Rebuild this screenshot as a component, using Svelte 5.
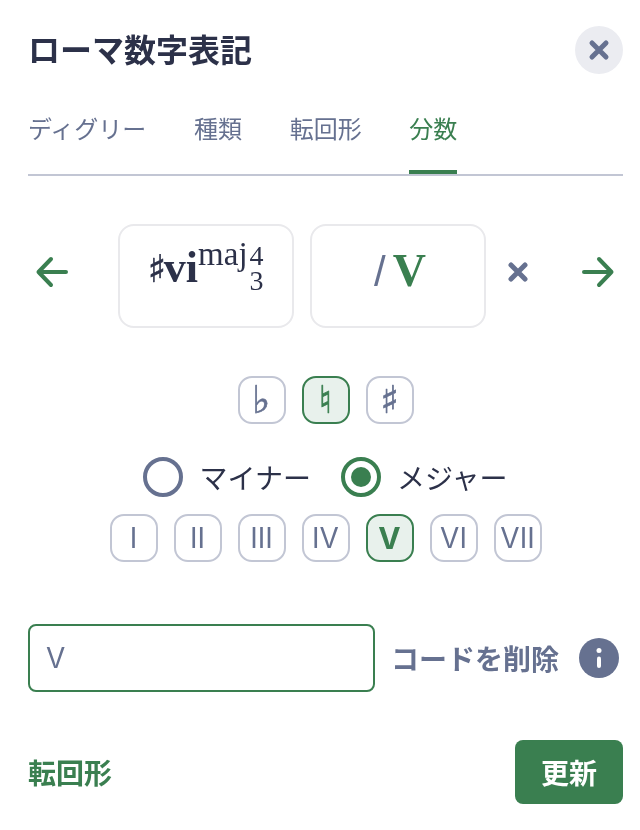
<script>
  const tabs = ['ディグリー', '種類', '転回形', '分数'];
  const accidentals = ['♭', '♮', '♯'];
  const degrees = ['I', 'II', 'III', 'IV', 'V', 'VI', 'VII'];

  let activeTab = $state('分数');
  let accidental = $state('♮');
  let quality = $state('major');
  let degree = $state('V');
</script>

<div class="panel">
  <header class="head">
    <h1>ローマ数字表記</h1>
    <button class="close" aria-label="閉じる">
      <svg viewBox="0 0 24 24" width="24" height="24"><path d="M5 5l14 14M19 5L5 19" /></svg>
    </button>
  </header>

  <nav class="tabs">
    {#each tabs as tab}
      <button class="tab" class:active={activeTab === tab} onclick={() => (activeTab = tab)}>{tab}</button>
    {/each}
  </nav>

  <section class="chord-row">
    <button class="arrow" aria-label="前へ">
      <svg viewBox="0 0 34 34" width="34" height="34"><path d="M31 17H3.500M16 4L3.500 17 16 30" /></svg>
    </button>
    <div class="chord-box numeral">
      <div class="chord"><span class="acc">♯</span><span class="vi">vi</span><span class="sup">maj</span><span class="stack"><span>4</span><span>3</span></span></div>
    </div>
    <div class="chord-box">
      <div class="chord"><span class="slash">/</span><span class="bass">V</span></div>
    </div>
    <button class="remove" aria-label="削除">
      <svg viewBox="0 0 20 20" width="20" height="20"><path d="M3 3l14 14M17 3L3 17" /></svg>
    </button>
    <button class="arrow" aria-label="次へ">
      <svg viewBox="0 0 34 34" width="34" height="34"><path d="M3 17h27.500M18 4l12.500 13L18 30" /></svg>
    </button>
  </section>

  <div class="accidentals">
    {#each accidentals as a}
      <button class="chip acc-chip" class:on={accidental === a} onclick={() => (accidental = a)}>{a}</button>
    {/each}
  </div>

  <div class="radios">
    <button class="radio" onclick={() => (quality = 'minor')}>
      <span class="dot" class:on={quality === 'minor'}></span>マイナー
    </button>
    <button class="radio" onclick={() => (quality = 'major')}>
      <span class="dot" class:on={quality === 'major'}></span>メジャー
    </button>
  </div>

  <div class="degrees">
    {#each degrees as d}
      <button class="chip" class:on={degree === d} onclick={() => (degree = d)}>{d}</button>
    {/each}
  </div>

  <div class="input-row">
    <input type="text" bind:value={degree} />
    <button class="delete">コードを削除</button>
    <button class="info" aria-label="情報">
      <svg viewBox="0 0 40 40" width="40" height="40">
        <circle cx="20" cy="20" r="20" fill="#667190" />
        <circle cx="20" cy="12.500" r="2.500" fill="#fff" />
        <rect x="18" y="18.500" width="4" height="11.500" rx="2" fill="#fff" />
      </svg>
    </button>
  </div>

  <footer class="foot">
    <button class="link">転回形</button>
    <button class="update">更新</button>
  </footer>
</div>

<style>
  :global(body) {
    background: #fff;
  }

  .panel {
    width: 623px;
    height: 830px;
    box-sizing: border-box;
    padding: 26px 0 0 28px;
    font-family: "Noto Sans CJK JP", "Noto Sans", sans-serif;
    color: #2c3149;
    will-change: opacity;
  }

  button {
    font-family: inherit;
    background: none;
    border: none;
    padding: 0;
    cursor: pointer;
  }

  .head {
    display: flex;
    justify-content: space-between;
    align-items: flex-start;
    height: 48px;
  }

  h1 {
    margin: 0;
    font-size: 32px;
    font-weight: 700;
    line-height: 44px;
  }

  .close {
    width: 48px;
    height: 48px;
    border-radius: 50%;
    background: #ebecf1;
    display: flex;
    align-items: center;
    justify-content: center;
  }

  .close path {
    fill: none;
    stroke: #667190;
    stroke-width: 5;
    stroke-linecap: round;
  }

  .tabs {
    display: flex;
    gap: 47.67px;
    height: 76px;
    margin-top: 24px;
    border-bottom: 2px solid #c2c6d4;
  }

  .tab {
    height: 76px;
    font-size: 24px;
    line-height: 60px;
    color: #667190;
    display: block;
    text-align: left;
    padding-bottom: 16px;
    box-sizing: border-box;
  }

  .tab.active {
    color: #3a7f50;
    border-bottom: 4px solid #3a7f50;
  }

  .chord-row {
    display: flex;
    align-items: center;
    margin-top: 48px;
    height: 104px;
  }

  .arrow {
    width: 48px;
    height: 48px;
    flex-shrink: 0;
    margin-bottom: 8px;
    display: flex;
    align-items: center;
    justify-content: center;
  }

  .arrow path {
    fill: none;
    stroke: #3a7f50;
    stroke-width: 4;
    stroke-linecap: round;
    stroke-linejoin: round;
  }

  .chord-row > .arrow:first-child {
    margin-right: 42px;
  }

  .chord-box {
    width: 176px;
    height: 104px;
    flex-shrink: 0;
    box-sizing: border-box;
    border: 2px solid #e9e9ec;
    border-radius: 16px;
    display: flex;
    justify-content: center;
    align-items: center;
    font-family: "Liberation Serif", serif;
  }

  .numeral {
    padding-bottom: 22px;
  }

  .chord-box + .chord-box {
    margin-left: 16px;
  }

  .chord {
    white-space: nowrap;
    line-height: 60px;
  }

  .numeral .chord {
    margin-right: 1px;
  }

  .acc {
    font-family: "DejaVu Sans", sans-serif;
    font-size: 38px;
    font-weight: 700;
    margin-right: -2px;
    -webkit-text-stroke: 0.6px currentColor;
  }

  .vi {
    font-size: 44px;
    font-weight: 700;
  }

  .sup {
    font-size: 33px;
    vertical-align: 17px;
  }

  .stack {
    display: inline-flex;
    flex-direction: column;
    margin-left: 2px;
    font-size: 28px;
    line-height: 25px;
    vertical-align: 17px;
    height: 30px;
  }

  .slash {
    color: #667190;
    font-family: "Liberation Sans", sans-serif;
    font-size: 42px;
    margin: 0 7px 0 4px;
  }

  .bass {
    color: #3a7f50;
    font-size: 46px;
    font-weight: 700;
  }

  .remove {
    width: 20px;
    height: 20px;
    margin-left: 22px;
    margin-bottom: 8px;
    flex-shrink: 0;
    display: flex;
  }

  .remove path {
    fill: none;
    stroke: #667190;
    stroke-width: 5;
    stroke-linecap: round;
  }

  .remove + .arrow {
    margin-left: 46px;
  }

  .accidentals,
  .degrees {
    display: flex;
    justify-content: center;
    gap: 16px;
  }

  .accidentals {
    margin-top: 48px;
  }

  .chip {
    width: 48px;
    height: 48px;
    box-sizing: border-box;
    border: 2px solid #c2c6d4;
    border-radius: 14px;
    color: #667190;
    font-family: Inter, sans-serif;
    font-size: 28px;
    display: flex;
    align-items: center;
    justify-content: center;
  }

  .acc-chip {
    font-family: "DejaVu Sans", sans-serif;
    font-size: 38px;
    -webkit-text-stroke: 0.7px currentColor;
  }

  .chip.on {
    border-color: #3a7f50;
    background: #e8f1ec;
    color: #3a7f50;
  }

  .degrees .chip.on {
    font-size: 30px;
    font-weight: 700;
  }

  .radios {
    display: flex;
    justify-content: center;
    gap: 30px;
    margin-top: 33px;
    height: 40px;
  }

  .radio {
    display: flex;
    align-items: center;
    gap: 16px;
    font-size: 28px;
    color: #2c3149;
  }

  .dot {
    width: 40px;
    height: 40px;
    box-sizing: border-box;
    border-radius: 50%;
    border: 4px solid #667190;
    display: flex;
    align-items: center;
    justify-content: center;
  }

  .dot.on {
    border-color: #3a7f50;
  }

  .dot.on::after {
    content: '';
    width: 20px;
    height: 20px;
    border-radius: 50%;
    background: #3a7f50;
  }

  .degrees {
    margin-top: 17px;
  }

  .input-row {
    display: flex;
    align-items: center;
    margin-top: 62px;
  }

  input {
    width: 347px;
    height: 68px;
    flex-shrink: 0;
    box-sizing: border-box;
    border: 2px solid #3a7f50;
    border-radius: 8px;
    padding: 0 16px;
    font-family: Inter, sans-serif;
    font-size: 28px;
    color: #667190;
    outline: none;
  }

  .delete {
    margin-left: 16px;
    font-size: 28px;
    font-weight: 700;
    color: #667190;
    white-space: nowrap;
  }

  .info {
    margin-left: 20px;
    width: 40px;
    height: 40px;
    display: flex;
  }

  .foot {
    display: flex;
    justify-content: space-between;
    align-items: center;
    margin-top: 48px;
  }

  .link {
    font-size: 28px;
    font-weight: 700;
    color: #3a7f50;
  }

  .update {
    width: 108px;
    height: 64px;
    border-radius: 8px;
    background: #3a7f50;
    color: #fff;
    font-size: 28px;
    font-weight: 700;
  }
</style>
